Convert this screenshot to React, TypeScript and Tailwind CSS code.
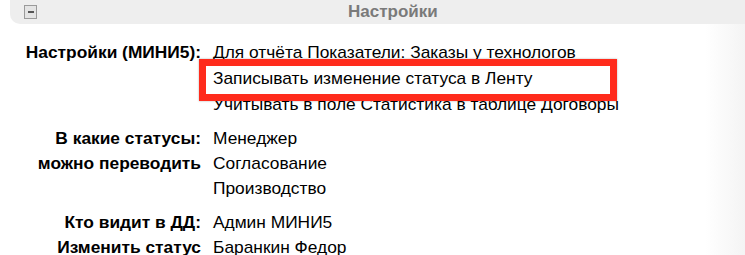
import React from "react";

const groups: { labels: string[]; values: string[]; lh: string }[] = [
  {
    labels: ["Настройки (МИНИ5):"],
    values: [
      "Для отчёта Показатели: Заказы у технологов",
      "Записывать изменение статуса в Ленту",
      "Учитывать в поле Статистика в таблице Договоры",
    ],
    lh: "leading-[26px]",
  },
  {
    labels: ["В какие статусы:", "можно переводить"],
    values: ["Менеджер", "Согласование", "Производство"],
    lh: "leading-[25px]",
  },
  {
    labels: ["Кто видит в ДД:", "Изменить статус"],
    values: ["Админ МИНИ5", "Баранкин Федор"],
    lh: "leading-[25px]",
  },
];

export default function App() {
  return (
    <div
      className="relative w-[745px] h-[255px] overflow-hidden bg-white text-black"
      style={{ fontFamily: '"Liberation Sans", Arial, sans-serif' }}
    >
      <div className="pointer-events-none absolute right-0 top-0 h-full w-[40px] bg-gradient-to-r from-transparent to-[#f4f4f4]" />
      <div className="relative ml-[10px] flex h-[24px] items-center rounded-bl-[10px] bg-[#eeeeee]">
        <div className="ml-[14px] flex h-[14px] w-[13px] items-center justify-center border border-[#9a9a9a] bg-[#e4e4e4]">
          <div className="h-[2px] w-[6px] bg-[#555]" />
        </div>
        <div className="absolute left-[338px] top-0 flex h-full items-center text-[17px] font-bold text-[#7a7a7a]">
          Настройки
        </div>
      </div>
      <div className="relative flex flex-col gap-[9px] pt-[15px] text-[17.35px]">
        {groups.map((g, i) => (
          <div key={i} className={`flex ${g.lh}`}>
            <div className="w-[201px] shrink-0 text-right font-bold">
              {g.labels.map((l) => (
                <div key={l}>{l}</div>
              ))}
            </div>
            <div className="pl-[12px]">
              {g.values.map((v) => (
                <div key={v}>{v}</div>
              ))}
            </div>
          </div>
        ))}
      </div>
      <div className="absolute left-[199px] top-[59px] h-[42px] w-[418px] border-[7px] border-[#ff2b1c] shadow-[0_0_2px_rgba(0,0,0,0.3)]" />
    </div>
  );
}
